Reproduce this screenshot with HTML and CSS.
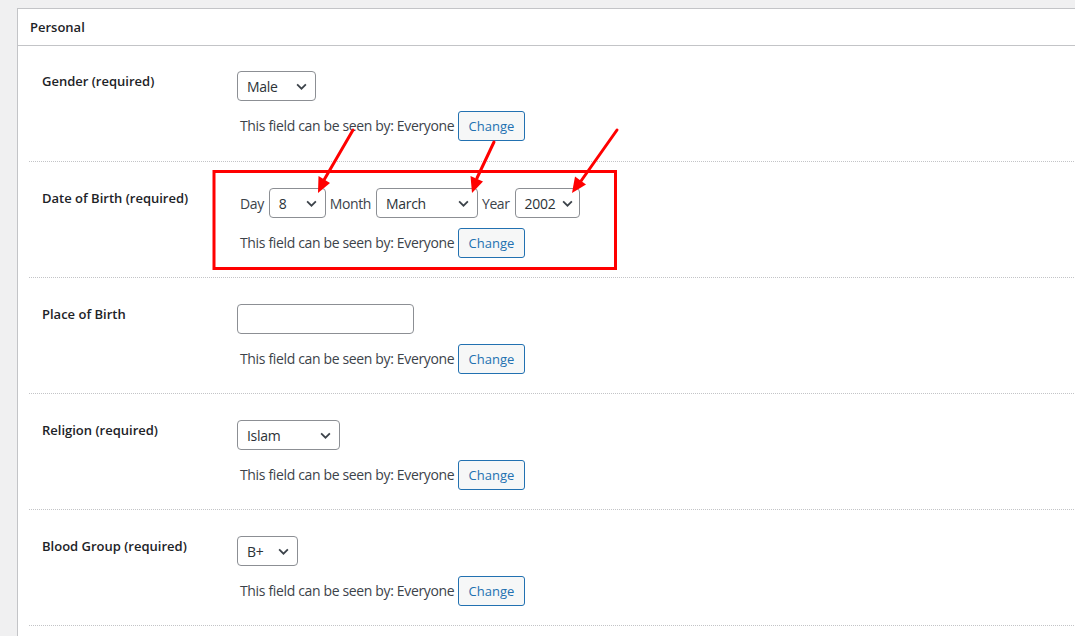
FILE: index.html
```html
<!DOCTYPE html>
<html lang="en">
<head>
    <meta charset="UTF-8">
    <meta name="viewport" content="width=device-width, initial-scale=1.0">
    <title>Edit Profile - Personal</title>
    <link rel="stylesheet" href="styles.css">
</head>
<body>

<div class="panel">
    <div class="panel-header">Personal</div>

    <div class="field-row">
        <div class="field-label">Gender (required)</div>
        <div class="field-body">
            <div class="select w-gender"><span>Male</span><svg class="chev" viewBox="0 0 12 8"><path d="M1 1.5l5 5 5-5"/></svg></div>
            <div class="visibility">This field can be seen by: Everyone <button class="btn-change">Change</button></div>
        </div>
    </div>

    <div class="field-row">
        <div class="field-label">Date of Birth (required)</div>
        <div class="field-body">
            <div class="dob">
                <span>Day</span>
                <div class="select w-day"><span>8</span><svg class="chev" viewBox="0 0 12 8"><path d="M1 1.5l5 5 5-5"/></svg></div>
                <span>Month</span>
                <div class="select w-month"><span>March</span><svg class="chev" viewBox="0 0 12 8"><path d="M1 1.5l5 5 5-5"/></svg></div>
                <span>Year</span>
                <div class="select w-year"><span>2002</span><svg class="chev" viewBox="0 0 12 8"><path d="M1 1.5l5 5 5-5"/></svg></div>
            </div>
            <div class="visibility">This field can be seen by: Everyone <button class="btn-change">Change</button></div>
        </div>
    </div>

    <div class="field-row">
        <div class="field-label">Place of Birth</div>
        <div class="field-body">
            <input type="text" class="text-input">
            <div class="visibility">This field can be seen by: Everyone <button class="btn-change">Change</button></div>
        </div>
    </div>

    <div class="field-row">
        <div class="field-label">Religion (required)</div>
        <div class="field-body">
            <div class="select w-religion"><span>Islam</span><svg class="chev" viewBox="0 0 12 8"><path d="M1 1.5l5 5 5-5"/></svg></div>
            <div class="visibility">This field can be seen by: Everyone <button class="btn-change">Change</button></div>
        </div>
    </div>

    <div class="field-row">
        <div class="field-label">Blood Group (required)</div>
        <div class="field-body">
            <div class="select w-blood"><span>B+</span><svg class="chev" viewBox="0 0 12 8"><path d="M1 1.5l5 5 5-5"/></svg></div>
            <div class="visibility">This field can be seen by: Everyone <button class="btn-change">Change</button></div>
        </div>
    </div>
</div>

<!-- annotation drawn over the screenshot -->
<svg class="annotations" viewBox="0 0 1075 636" width="1075" height="636">
    <rect x="214" y="171.5" width="401.5" height="97" fill="none" stroke="#ff0000" stroke-width="3"/>
    <g stroke="#ff0000" stroke-width="3" stroke-linecap="round">
        <line x1="353" y1="130" x2="324" y2="180"/>
        <line x1="494" y1="142" x2="477" y2="178"/>
        <line x1="617" y1="130" x2="581" y2="181"/>
    </g>
    <g fill="#ff0000">
        <polygon points="318,193 318.5,176 330,183"/>
        <polygon points="472,193 470.5,176 483,181.5"/>
        <polygon points="572,193 575,176.5 586,184.5"/>
    </g>
</svg>

</body>
</html>
```

FILE: styles.css
```css
body {
    margin: 0;
    background-color: #f0f0f1;
    font-family: "Open Sans", "Noto Sans", sans-serif;
    font-size: 13px;
    color: #3c434a;
    overflow: hidden;
    height: 636px;
    position: relative;
}
.panel {
    margin: 8px 0 0 17px;
    width: 1200px;
    padding-bottom: 60px;
    background-color: #fff;
    border: 1px solid #c3c4c7;
    border-right: none;
}
.panel-header {
    height: 36px;
    line-height: 36px;
    padding-left: 12px;
    font-size: 13px;
    font-weight: 600;
    color: #1d2327;
    border-bottom: 1px solid #c3c4c7;
}
.field-row {
    display: flex;
    margin-left: 11px;
    padding: 26px 0 19px 13px;
    border-bottom: 1px dotted #c3c4c7;
}
.panel-header + .field-row {
    padding-top: 25px;
    padding-bottom: 20px;
}
.field-label {
    width: 195px;
    flex-shrink: 0;
    line-height: 20px;
    font-weight: 600;
    color: #1d2327;
}
.field-body {
    display: flex;
    flex-direction: column;
    align-items: flex-start;
}
.select {
    box-sizing: border-box;
    height: 30px;
    display: inline-flex;
    align-items: center;
    justify-content: space-between;
    padding: 0 8px 0 9px;
    border: 1px solid #8c8f94;
    border-radius: 4px;
    background: #fff;
    font-size: 14px;
    letter-spacing: -0.3px;
    color: #2c3338;
}
.chev {
    width: 11px;
    height: 7px;
    fill: none;
    stroke: #3c434a;
    stroke-width: 2;
}
.w-gender { width: 79px; }
.w-day { width: 57px; }
.w-month { width: 102px; }
.w-year { width: 65px; padding-right: 6px; }
.w-religion { width: 103px; }
.w-blood { width: 61px; }
.dob {
    display: flex;
    align-items: center;
    gap: 5px;
    padding-left: 3px;
    font-size: 14px;
    letter-spacing: -0.4px;
}
.dob .select + span {
    margin-left: -1px;
}
.text-input {
    box-sizing: border-box;
    width: 177px;
    height: 30px;
    margin: 0;
    border: 1px solid #8c8f94;
    border-radius: 4px;
}
.visibility {
    margin-top: 10px;
    padding-left: 3px;
    font-size: 14px;
    letter-spacing: -0.35px;
    line-height: 30px;
    white-space: nowrap;
}
.btn-change {
    box-sizing: border-box;
    height: 30px;
    margin-left: 0;
    padding: 0 10px;
    vertical-align: top;
    font-family: inherit;
    font-size: 13px;
    letter-spacing: 0;
    color: #2271b1;
    background-color: #f6f7f7;
    border: 1px solid #2271b1;
    border-radius: 3px;
}
.annotations {
    position: absolute;
    top: 0;
    left: 0;
    pointer-events: none;
}
```
